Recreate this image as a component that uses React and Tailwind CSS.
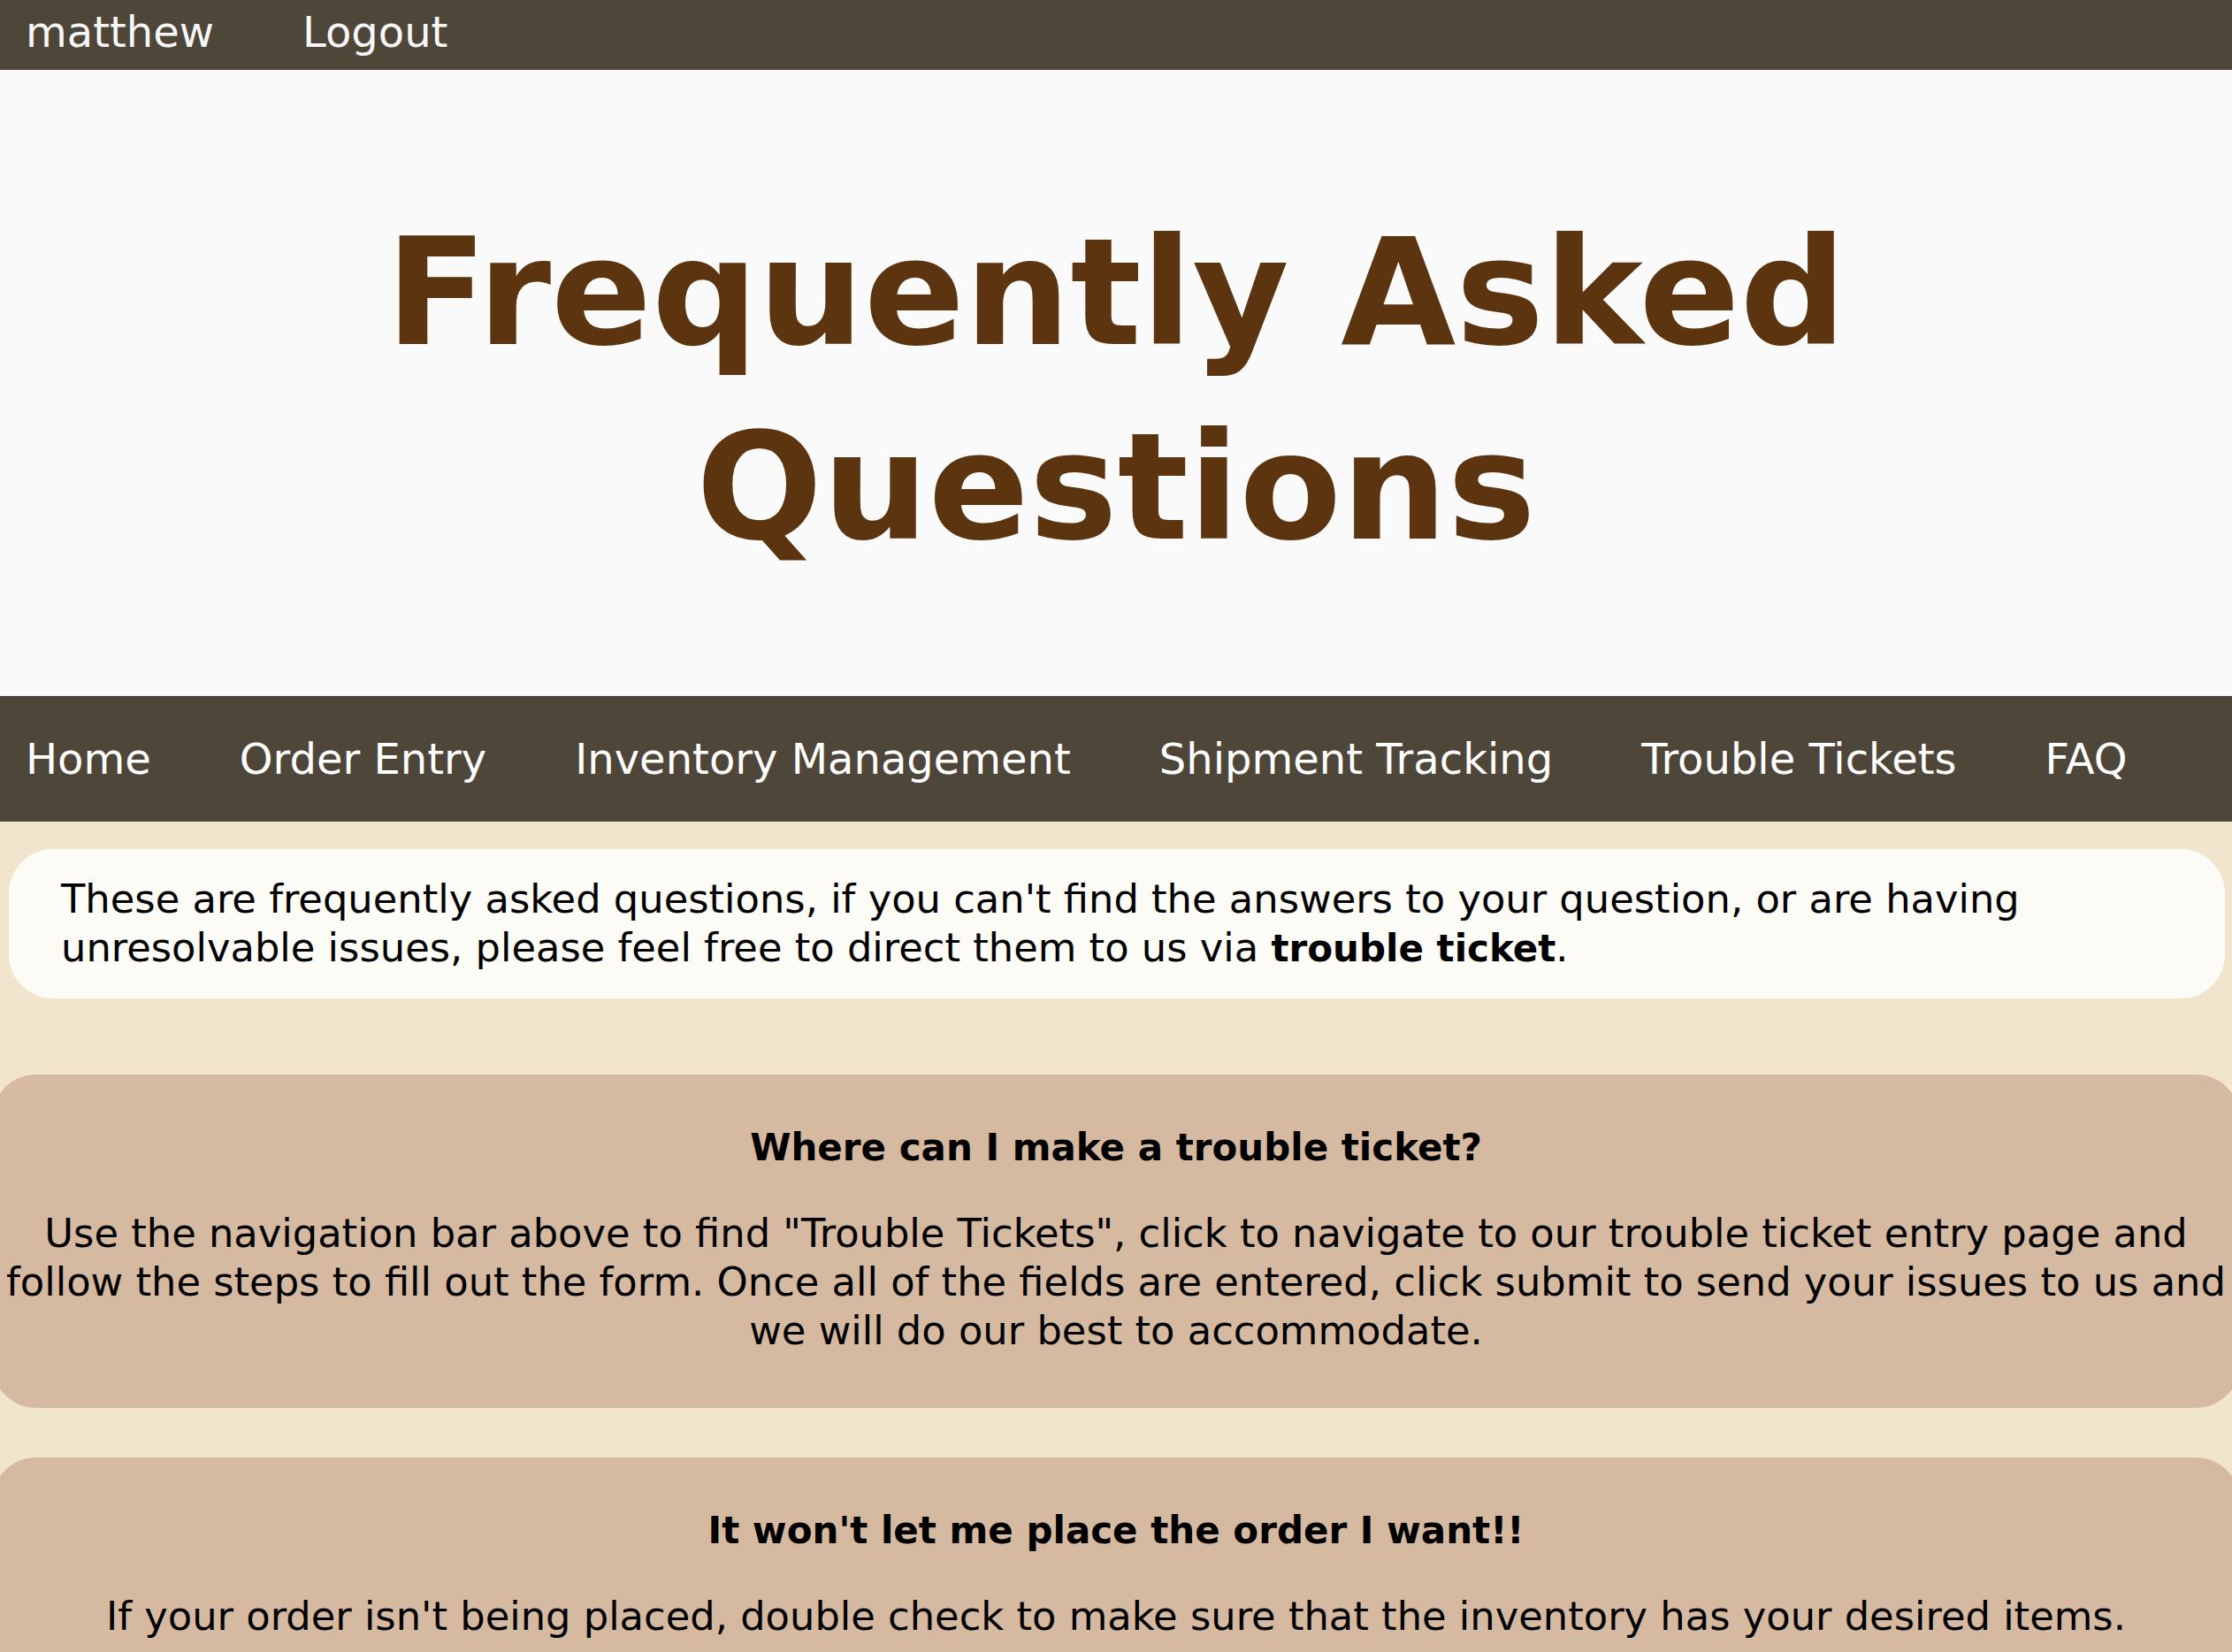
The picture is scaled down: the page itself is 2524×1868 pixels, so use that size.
import React from "react";

const navLinks = ["Home", "Order Entry", "Inventory Management", "Shipment Tracking", "Trouble Tickets", "FAQ"];

const faqs = [
  {
    q: "Where can I make a trouble ticket?",
    a: 'Use the navigation bar above to find "Trouble Tickets", click to navigate to our trouble ticket entry page and follow the steps to fill out the form. Once all of the fields are entered, click submit to send your issues to us and we will do our best to accommodate.',
  },
  {
    q: "It won't let me place the order I want!!",
    a: "If your order isn't being placed, double check to make sure that the inventory has your desired items.",
  },
];

export default function App() {
  return (
    <div className="min-h-screen overflow-x-hidden bg-[#f2e5ce] font-['DejaVu_Sans',sans-serif] text-black">
      {/* user bar */}
      <div className="flex h-[79px] items-start gap-[100px] bg-[#4f463a] pl-[29px] pt-[8px] text-[48px] leading-[56px] text-[#f7f7f7]">
        <a href="#">matthew</a>
        <a href="#">Logout</a>
      </div>

      <header className="bg-[#fafafa] pb-[126px] pt-[142px]">
        <h1 className="text-center text-[168px] font-bold leading-[220px] text-[#5c3510]">
          Frequently Asked Questions
        </h1>
      </header>

      <nav className="flex h-[142px] items-center gap-[100px] bg-[#4f463a] pl-[29px] text-[48px] leading-[56px] text-white">
        {navLinks.map((link) => (
          <a key={link} href="#" className="whitespace-nowrap">
            {link}
          </a>
        ))}
      </nav>

      <main className="pb-[60px] pt-[31px]">
        <p className="ml-[10px] mr-[8px] rounded-[50px] bg-[#fcfbf6] px-[59px] py-[29px] text-[44.8px] leading-[55px]">
          <span>These are frequently asked questions, if you can't find the answers to your question, or are having</span>
          <br />
          <span>unresolvable issues, please feel free to direct them to us via </span>
          <b className="text-[42px]">trouble ticket</b>
          <span>.</span>
        </p>

        <div className="mx-[-9px] mt-[86px] flex flex-col gap-[56px]">
          {faqs.map((item) => (
            <section key={item.q} className="rounded-[50px] bg-[#d5b9a0] px-[10px] pb-[60px] pt-[55px] text-center">
              <h2 className="mb-[42px] text-[42px] font-bold leading-[55px]">{item.q}</h2>
              <p className="text-[44.8px] leading-[55px]">{item.a}</p>
            </section>
          ))}
        </div>
      </main>
    </div>
  );
}
